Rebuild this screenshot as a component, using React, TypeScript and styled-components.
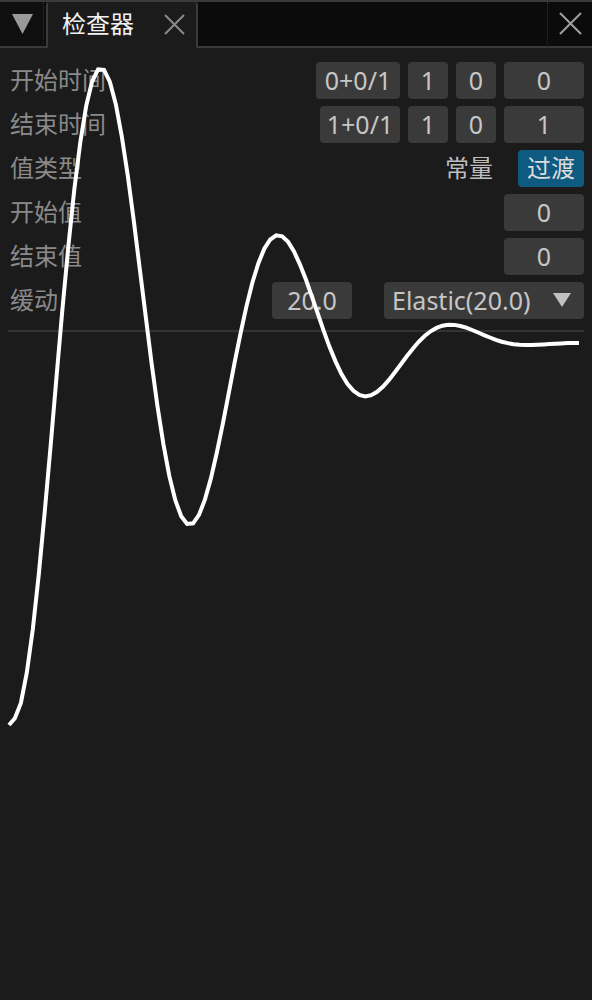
import React from "react";
import styled, { createGlobalStyle } from "styled-components";

const Global = createGlobalStyle`
  html, body { margin: 0; padding: 0; background: #1b1b1b; }
  * { box-sizing: border-box; }
  body { font-family: "Noto Sans", "Noto Sans CJK SC", sans-serif; }
`;

const Page = styled.div`
  position: relative;
  width: 592px;
  height: 1000px;
  background: #1b1b1b;
  overflow: hidden;
`;

const Bar = styled.div`
  display: flex;
  height: 48px;
  background: #0b0b0b;
  border-top: 2px solid #3a3a3a;
`;

const MenuButton = styled.div`
  width: 44px;
  display: flex;
  align-items: center;
  justify-content: center;
  background: #0f0f0f;
  border-right: 1px dotted #2e2e2e;
  border-bottom: 2px solid #3a3a3a;
  padding-left: 2px;
`;

const Gap = styled.div`
  width: 2px;
  border-bottom: 2px solid #3a3a3a;
`;

const Tab = styled.div`
  width: 152px;
  display: flex;
  align-items: center;
  justify-content: space-between;
  padding: 0 11px 2px 14px;
  background: #1b1b1b;
  border-left: 2px solid #3a3a3a;
  border-right: 2px solid #3a3a3a;
  border-radius: 3px 3px 0 0;
`;

const TabTitle = styled.span`
  color: #f2f2f2;
  font-size: 24px;
  line-height: 1;
`;

const Spacer = styled.div`
  flex: 1;
  border-bottom: 2px solid #3a3a3a;
`;

const CloseButton = styled.div`
  width: 45px;
  display: flex;
  align-items: center;
  justify-content: center;
  border-left: 1px dotted #2e2e2e;
  border-bottom: 2px solid #3a3a3a;
  padding-bottom: 2px;
`;

const Content = styled.div`
  display: flex;
  flex-direction: column;
  padding: 10px 8px 0;
`;

const Row = styled.div`
  display: flex;
  align-items: center;
  height: 44px;
`;

const Label = styled.span`
  flex: 1;
  padding-left: 2px;
  color: #8a8a8a;
  font-size: 24px;
  line-height: 1;
`;

const Controls = styled.div<{ $gap?: number }>`
  display: flex;
  align-items: center;
  gap: ${(p) => p.$gap ?? 8}px;
`;

const Box = styled.div<{ $w?: number; $active?: boolean }>`
  height: 37px;
  width: ${(p) => (p.$w ? `${p.$w}px` : "auto")};
  padding: 0 9px;
  display: flex;
  align-items: center;
  justify-content: center;
  border-radius: 4px;
  background: ${(p) => (p.$active ? "#0e5a80" : "#3a3a3a")};
  color: ${(p) => (p.$active ? "#dcdcdc" : "#c6c6c6")};
  font-size: ${(p) => (p.$active ? 24 : 25)}px;
  line-height: 1;
  white-space: nowrap;
`;

const PlainOption = styled.span`
  color: #bebebe;
  font-size: 24px;
  line-height: 1;
  margin-right: 17px;
`;

const Dropdown = styled.div`
  width: 200px;
  height: 37px;
  display: flex;
  align-items: center;
  justify-content: space-between;
  padding: 0 13px 0 8px;
  border-radius: 4px;
  background: #3a3a3a;
  color: #c6c6c6;
  font-size: 25px;
  line-height: 1;
`;

const Separator = styled.div`
  height: 2px;
  margin-top: 8px;
  background: #333333;
`;

const CurveLayer = styled.svg`
  position: absolute;
  left: 0;
  top: 0;
  pointer-events: none;
`;

function curvePath(): string {
  const n = 96;
  const pts: string[] = [];
  for (let i = 0; i <= n; i++) {
    const t = i / n;
    const gain = 1 + 0.03 * Math.min(1, t / 0.1);
    const v =
      i === 0 ? 0 : 1 - gain * (1 - t) * (1 - t) * Math.cos(20 * (t - 0.01));
    const x = 9 + 570 * t;
    const y = 725 - 382 * v;
    pts.push(`${x.toFixed(1)},${y.toFixed(1)}`);
  }
  return pts.join(" ");
}

export default function App() {
  return (
    <Page>
      <Global />
      <Bar>
        <MenuButton>
          <svg width="21" height="21" viewBox="0 0 21 21">
            <polygon points="0,0 21,0 10.5,20" fill="#9a9a9a" />
          </svg>
        </MenuButton>
        <Gap />
        <Tab>
          <TabTitle>检查器</TabTitle>
          <svg width="21" height="21" viewBox="0 0 21 21">
            <path d="M1 1 L20 20 M20 1 L1 20" stroke="#8a8a8a" strokeWidth="2" />
          </svg>
        </Tab>
        <Spacer />
        <CloseButton>
          <svg width="23" height="23" viewBox="0 0 23 23">
            <path d="M1 1 L22 22 M22 1 L1 22" stroke="#a0a0a0" strokeWidth="2" />
          </svg>
        </CloseButton>
      </Bar>
      <Content>
        <Row>
          <Label>开始时间</Label>
          <Controls>
            <Box $w={84}>0+0/1</Box>
            <Box $w={40}>1</Box>
            <Box $w={40}>0</Box>
            <Box $w={80}>0</Box>
          </Controls>
        </Row>
        <Row>
          <Label>结束时间</Label>
          <Controls>
            <Box $w={80}>1+0/1</Box>
            <Box $w={40}>1</Box>
            <Box $w={40}>0</Box>
            <Box $w={80}>1</Box>
          </Controls>
        </Row>
        <Row>
          <Label>值类型</Label>
          <Controls $gap={8}>
            <PlainOption>常量</PlainOption>
            <Box $w={66} $active>过渡</Box>
          </Controls>
        </Row>
        <Row>
          <Label>开始值</Label>
          <Box $w={80}>0</Box>
        </Row>
        <Row>
          <Label>结束值</Label>
          <Box $w={80}>0</Box>
        </Row>
        <Row>
          <Label>缓动</Label>
          <Controls $gap={32}>
            <Box $w={80}>20.0</Box>
            <Dropdown>
              <span>Elastic(20.0)</span>
              <svg width="18" height="14" viewBox="0 0 18 14">
                <polygon points="0,0 18,0 9,14" fill="#c0c0c0" />
              </svg>
            </Dropdown>
          </Controls>
        </Row>
        <Separator />
      </Content>
      <CurveLayer width="592" height="1000" viewBox="0 0 592 1000">
        <polyline
          points={curvePath()}
          fill="none"
          stroke="#ffffff"
          strokeWidth="4"
          strokeLinejoin="miter"
        />
      </CurveLayer>
    </Page>
  );
}
